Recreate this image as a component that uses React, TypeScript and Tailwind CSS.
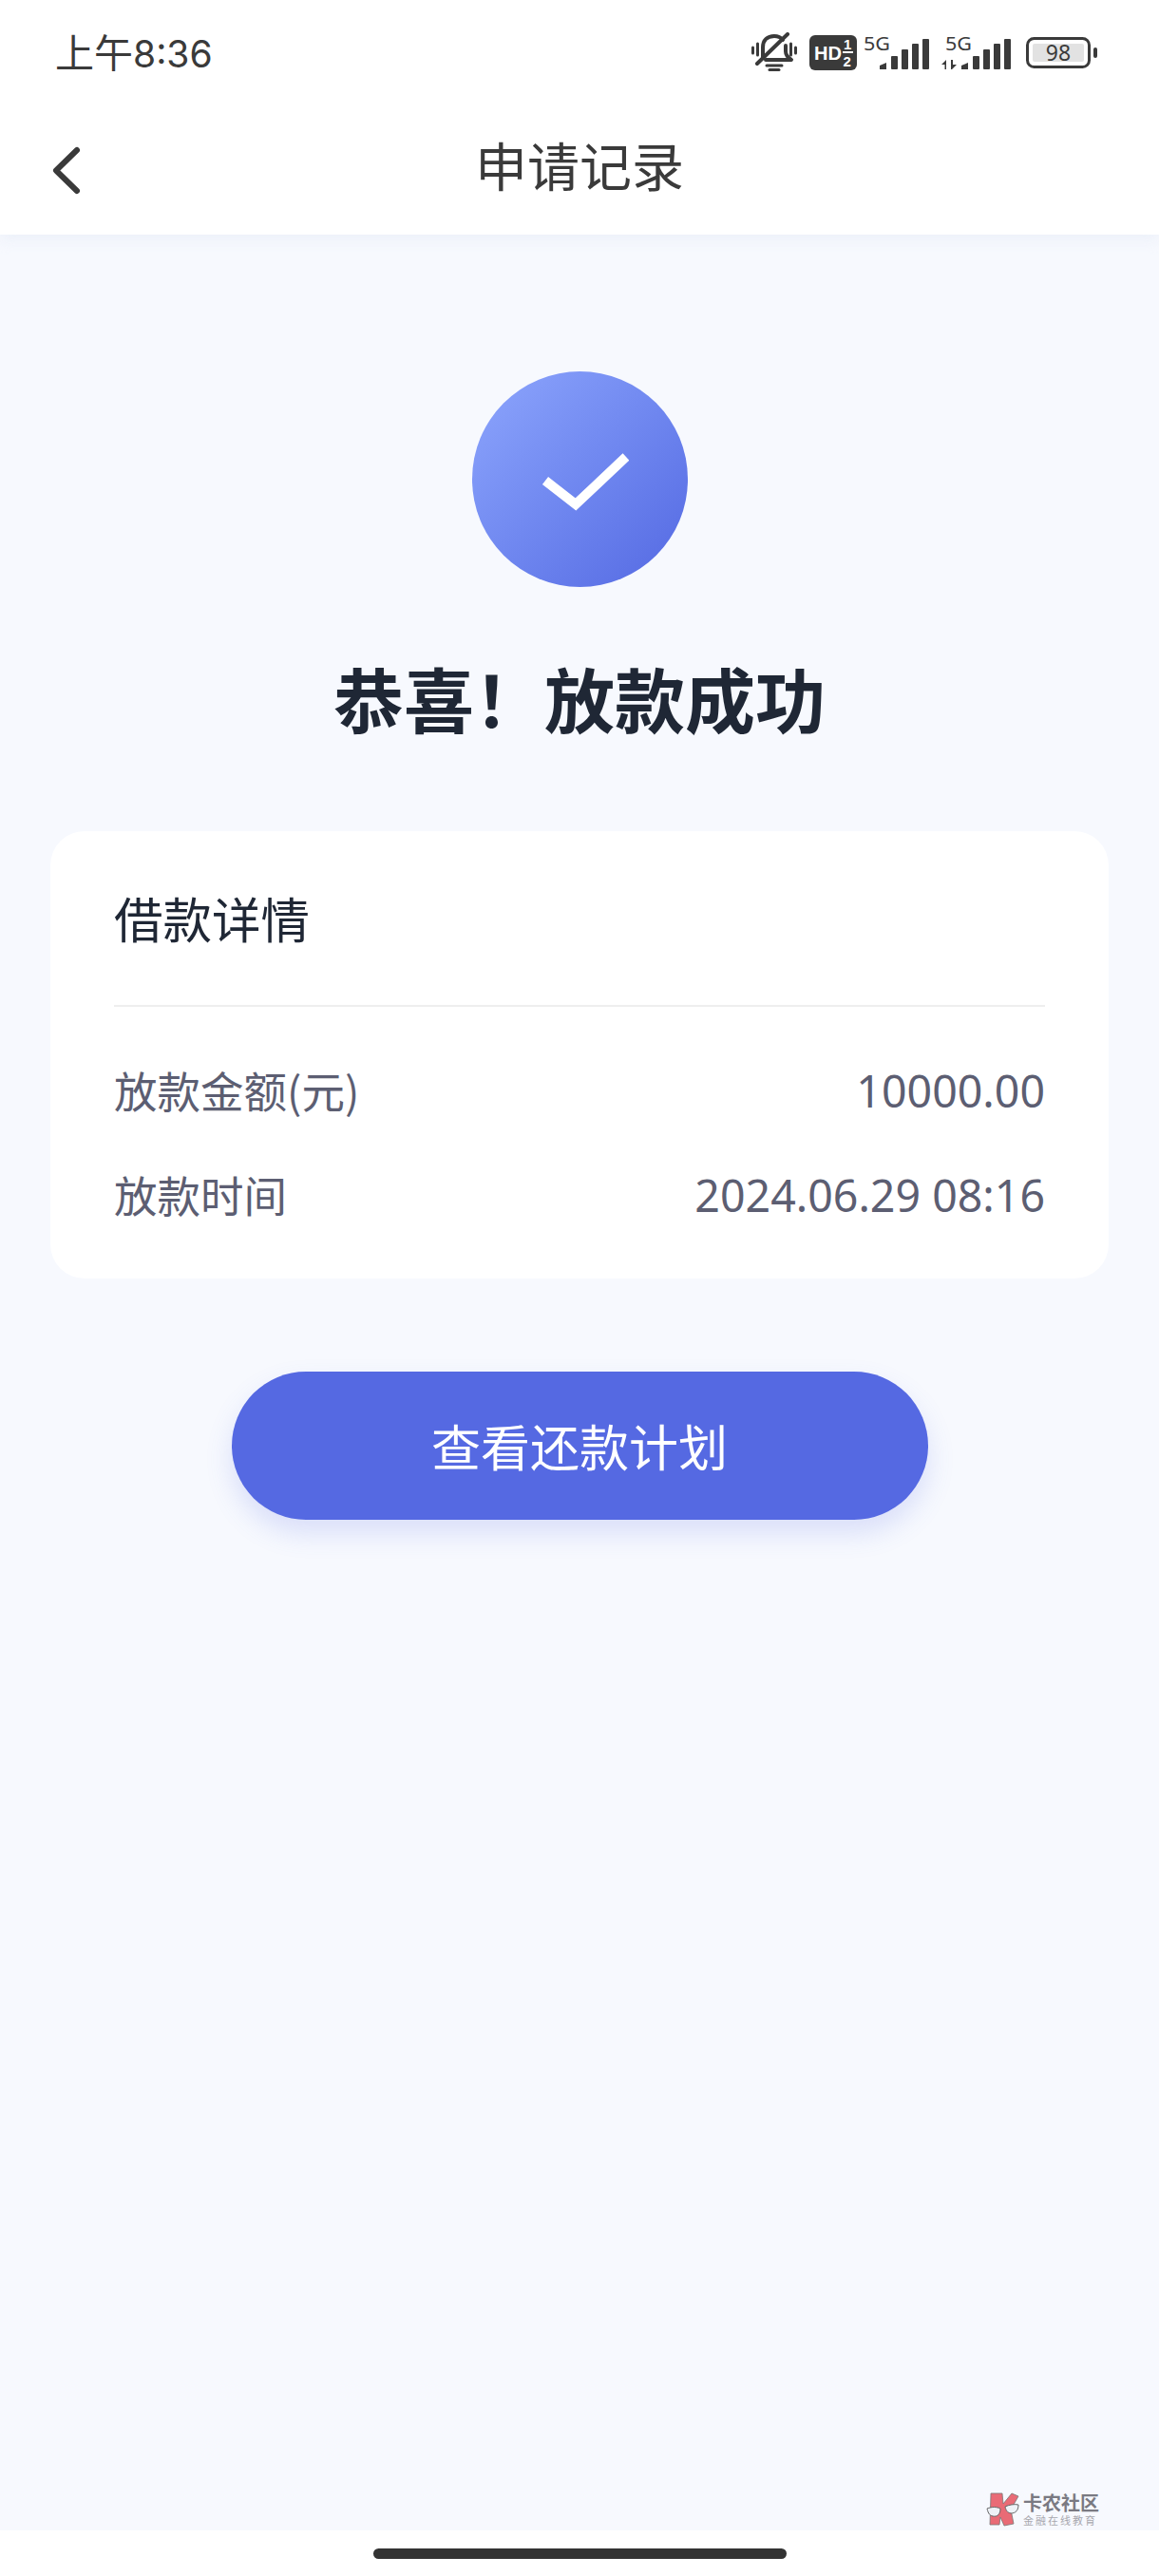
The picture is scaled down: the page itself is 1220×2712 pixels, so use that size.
const cjk = "font-['Noto_Sans_CJK_SC','Noto_Sans',sans-serif]";

function MuteBell() {
  return (
    <svg width="48" height="42" viewBox="0 0 48 42" fill="none" stroke="#3a3a3a" strokeLinecap="round">
      <path d="M12 27V16C12 8 17 4 24 4C28 4 31 5.500 33 8M36 14V20C36 24 39 27 42 29H15" strokeWidth="4" strokeLinejoin="round" />
      <path d="M6 33L38 2" strokeWidth="4" />
      <path d="M16 35H32" strokeWidth="3" />
      <path d="M19 39.500H29" strokeWidth="3" />
      <path d="M1.500 16V22M6.500 12V24M41.500 12V24M46.500 16V22" strokeWidth="3" />
    </svg>
  );
}

function HdBadge() {
  return (
    <svg width="50" height="37" viewBox="0 0 50 37" className="font-['Liberation_Sans',sans-serif]">
      <rect width="50" height="37" rx="6" fill="#3a3a3a" />
      <text x="5" y="26" fontSize="21" fontWeight="700" fill="#fff" textLength="29" lengthAdjust="spacingAndGlyphs">HD</text>
      <text x="36" y="15" fontSize="15" fontWeight="700" fill="#fff">1</text>
      <rect x="35" y="17" width="11" height="2" fill="#fff" />
      <text x="35.500" y="33" fontSize="15" fontWeight="700" fill="#fff">2</text>
    </svg>
  );
}

function Bars({ offset = 0 }: { offset?: number }) {
  return (
    <g fill="#3a3a3a">
      <path d={`M${offset} 36V32L${offset + 7} 29V36Z`} />
      <rect x={offset + 12} y="22" width="7" height="14" rx="1" />
      <rect x={offset + 23} y="15" width="7" height="21" rx="1" />
      <rect x={offset + 34} y="9" width="7" height="27" rx="1" />
      <rect x={offset + 45} y="4" width="7" height="32" rx="1" />
    </g>
  );
}

function SignalA() {
  return (
    <svg width="69" height="48" viewBox="0 -6 69 48" className="font-['Noto_Sans',sans-serif]">
      <text x="0" y="16" fontSize="20" fill="#3a3a3a" textLength="28" lengthAdjust="spacingAndGlyphs">5G</text>
      <Bars offset={17} />
    </svg>
  );
}

function SignalB() {
  return (
    <svg width="73" height="48" viewBox="0 -6 73 48" className="font-['Noto_Sans',sans-serif]">
      <text x="4" y="16" fontSize="20" fill="#3a3a3a" textLength="28" lengthAdjust="spacingAndGlyphs">5G</text>
      <path d="M0 31L5 26V36H3.500V31ZM10 26H12V31H16L11 36H10Z" fill="#3a3a3a" />
      <Bars offset={21} />
    </svg>
  );
}

function Battery() {
  return (
    <svg width="68" height="33" viewBox="0 0 68 33" className="font-['Noto_Sans',sans-serif]">
      <rect x="1.500" y="1.500" width="65" height="30" rx="7" fill="none" stroke="#3a3a3a" strokeWidth="3" />
      <rect x="7" y="7" width="54" height="19" rx="2" fill="#e2e2e2" />
      <text x="34" y="25" textAnchor="middle" fontSize="23" fill="#3a3a3a">98</text>
    </svg>
  );
}

function BatteryTip() {
  return <div className="ml-[3px] h-[11px] w-[4px] rounded-[2px] bg-[#3a3a3a]" />;
}

function WatermarkLogo() {
  return (
    <svg width="36" height="36" viewBox="0 0 36 36">
      <path d="M5 1H17L18 12L27 1L34 4L26 18L29 33L19 35L15 26L14 34H4Z" fill="#e96b76" stroke="#777" strokeWidth="0.800" />
      <path d="M1 17C6 15 11 15 15 17C15 23 12 26 7 25C3 24 2 21 1 17Z" fill="#eef2f7" stroke="#666" strokeWidth="1" />
      <path d="M20 15C24 13 30 12 34 13C34 19 31 22 26 22C22 21 21 19 20 15Z" fill="#eef2f7" stroke="#666" strokeWidth="1" />
    </svg>
  );
}

function Row({ label, value }: { label: string; value: string }) {
  return (
    <div className="flex h-[110px] items-center justify-between text-[#5c5e72]">
      <span className="text-[45.500px] leading-none font-normal">{label}</span>
      <span className="font-['Noto_Sans',sans-serif] text-[46.500px] leading-none font-normal">{value}</span>
    </div>
  );
}

export default function App() {
  return (
    <div className={`flex min-h-[2712px] w-[1220px] flex-col bg-[#f7f9fe] ${cjk}`}>
      <header className="relative z-10 h-[247px] bg-white shadow-[0_6px_14px_rgba(225,230,245,0.45)]">
        <div className="flex h-[110px] items-center justify-between pr-[65px] pl-[58px] text-[#3a3a3a]">
          <span className="flex -translate-y-[1px] items-baseline text-[41px] leading-none">
            上午<span className="font-['Inter',sans-serif] text-[39px]">8:36</span>
          </span>
          <div className="flex items-center">
            <MuteBell />
            <div className="ml-[13px]"><HdBadge /></div>
            <div className="ml-[7px]"><SignalA /></div>
            <div className="ml-[13px]"><SignalB /></div>
            <div className="ml-[16px] flex items-center"><Battery /><BatteryTip /></div>
          </div>
        </div>
        <div className="relative flex h-[130px] items-center justify-center">
          <svg className="absolute top-[42px] left-[54px]" width="32" height="55" viewBox="0 0 32 55" fill="none">
            <path d="M27 6L5 27.500L27 49" stroke="#3a3a3a" strokeWidth="6" strokeLinecap="round" strokeLinejoin="round" />
          </svg>
          <h1 className="-translate-y-[3px] text-[55px] leading-none font-normal text-[#3a3a3a]">申请记录</h1>
        </div>
      </header>

      <main className="flex flex-1 flex-col items-center px-[53px] pt-[144px]">
        <div className="flex h-[227px] w-[227px] items-center justify-center rounded-full bg-gradient-to-br from-[#8ea6fd] to-[#5468e2]">
          <svg className="translate-x-[6px] translate-y-[3px]" width="92" height="62" viewBox="0 0 92 62" fill="none">
            <path d="M4 29L36 54L89 4" stroke="#fff" strokeWidth="10" />
          </svg>
        </div>
        <h2 className="mt-[72px] text-[74px] leading-[1.2] font-bold text-[#1f2735]">恭喜！放款成功</h2>

        <section className="mt-[96px] w-full rounded-[36px] bg-white px-[67px] pb-[33px]">
          <div className="flex h-[185px] items-center border-b-2 border-[#eeeeee] pb-[2px]">
            <h3 className="text-[51.500px] leading-none font-normal text-[#1f2735]">借款详情</h3>
          </div>
          <div className="pt-[33px]">
            <Row label="放款金额(元)" value="10000.00" />
            <Row label="放款时间" value="2024.06.29 08:16" />
          </div>
        </section>

        <button className="mt-[98px] flex h-[156px] w-[733px] items-center justify-center rounded-full bg-[#5569e2] text-[52px] font-normal text-white shadow-[0_14px_28px_rgba(85,105,226,0.18)]">
          查看还款计划
        </button>

        <div className="mt-auto mb-[4px] flex w-full items-center justify-end pr-[10px]">
          <WatermarkLogo />
          <div className="ml-[3px] flex flex-col">
            <span className="text-[20px] leading-[22px] font-bold text-[#7a7a82]">卡农社区</span>
            <span className="text-[11px] leading-[14px] tracking-[2px] text-[#a8a8ae]">金融在线教育</span>
          </div>
        </div>
      </main>

      <footer className="flex h-[48px] justify-center bg-white pt-[19px]">
        <div className="h-[11px] w-[435px] rounded-full bg-[#333333]" />
      </footer>
    </div>
  );
}
